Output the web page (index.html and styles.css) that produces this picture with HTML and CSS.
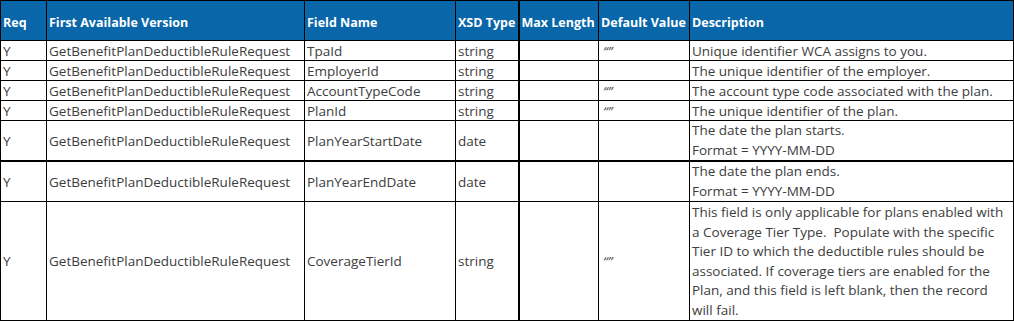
FILE: index.html
```html
<!DOCTYPE html>
<html>
<head>
<meta charset="utf-8">
<link rel="stylesheet" href="styles.css">
</head>
<body>
<table class="spec">
  <colgroup>
    <col class="c-req">
    <col class="c-ver">
    <col class="c-field">
    <col class="c-type">
    <col class="c-max">
    <col class="c-def">
    <col class="c-desc">
  </colgroup>
  <thead>
    <tr class="head">
      <th>Req</th>
      <th>First Available Version</th>
      <th>Field Name</th>
      <th>XSD Type</th>
      <th class="thick-l">Max Length</th>
      <th>Default Value</th>
      <th>Description</th>
    </tr>
  </thead>
  <tbody>
    <tr class="r1">
      <td>Y</td><td>GetBenefitPlanDeductibleRuleRequest</td><td>TpaId</td><td>string</td><td class="thick-l"></td><td class="def">“”</td><td>Unique identifier WCA assigns to you.</td>
    </tr>
    <tr class="r1">
      <td>Y</td><td>GetBenefitPlanDeductibleRuleRequest</td><td>EmployerId</td><td>string</td><td class="thick-l"></td><td class="def"></td><td>The unique identifier of the employer.</td>
    </tr>
    <tr class="r1">
      <td>Y</td><td>GetBenefitPlanDeductibleRuleRequest</td><td>AccountTypeCode</td><td>string</td><td class="thick-l"></td><td class="def">“”</td><td>The account type code associated with the plan.</td>
    </tr>
    <tr class="r1">
      <td>Y</td><td>GetBenefitPlanDeductibleRuleRequest</td><td>PlanId</td><td>string</td><td class="thick-l"></td><td class="def">“”</td><td>The unique identifier of the plan.</td>
    </tr>
    <tr class="r2">
      <td>Y</td><td>GetBenefitPlanDeductibleRuleRequest</td><td>PlanYearStartDate</td><td>date</td><td class="thick-l"></td><td class="def"></td>
      <td class="desc"><div class="box"><div class="lines">The date the plan starts.<br>Format = YYYY-MM-DD</div></div></td>
    </tr>
    <tr class="r2 thick-t">
      <td>Y</td><td>GetBenefitPlanDeductibleRuleRequest</td><td>PlanYearEndDate</td><td>date</td><td class="thick-l"></td><td class="def"></td>
      <td class="desc"><div class="box"><div class="lines">The date the plan ends.<br>Format = YYYY-MM-DD</div></div></td>
    </tr>
    <tr class="r6">
      <td>Y</td><td>GetBenefitPlanDeductibleRuleRequest</td><td>CoverageTierId</td><td>string</td><td class="thick-l"></td><td class="def">“”</td>
      <td class="desc"><div class="box"><div class="lines">This field is only applicable for plans enabled with<br>a Coverage Tier Type.&nbsp; Populate with the specific<br>Tier ID to which the deductible rules should be<br>associated. If coverage tiers are enabled for the<br>Plan, and this field is left blank, then the record<br>will fail.</div></div></td>
    </tr>
  </tbody>
</table>
</body>
</html>
```

FILE: styles.css
```css
html, body {
  margin: 0;
  padding: 0;
  background: #ffffff;
}

.spec {
  border-collapse: collapse;
  table-layout: fixed;
  width: 1013px;
  font-family: "Open Sans", "Liberation Sans", sans-serif;
  font-size: 13.5px;
  color: #3d3d3d;
}

.c-req { width: 46px; }
.c-ver { width: 258px; }
.c-field { width: 151px; }
.c-type { width: 63px; }
.c-max { width: 80px; }
.c-def { width: 91px; }
.c-desc { width: 324px; }

.spec th,
.spec td {
  border: 1px solid #000000;
  padding: 0 2px;
  text-align: left;
  white-space: nowrap;
  overflow: hidden;
  line-height: 18px;
  vertical-align: middle;
}

.head th {
  background: #0866a9;
  color: #ffffff;
  font-weight: 700;
  font-size: 12.5px;
  height: 35px;
  padding-top: 4px;
}

.r1 td { height: 19px; }
.r2 td { height: 39px; }
.r6 td { height: 118px; }

.spec .thick-l { border-left-width: 2px; }
.thick-t td { border-top-width: 2px; }

.spec td.def {
  font-style: italic;
  padding-left: 4px;
  color: #555555;
}

.spec td.desc {
  overflow: visible;
  vertical-align: top;
}

.box {
  display: flex;
  flex-direction: column;
  justify-content: flex-end;
  height: 39px;
}

.r6 .box { height: 118px; }

.lines {
  flex: none;
  line-height: 20px;
}

.r6 .lines { line-height: 19.5px; }
```
